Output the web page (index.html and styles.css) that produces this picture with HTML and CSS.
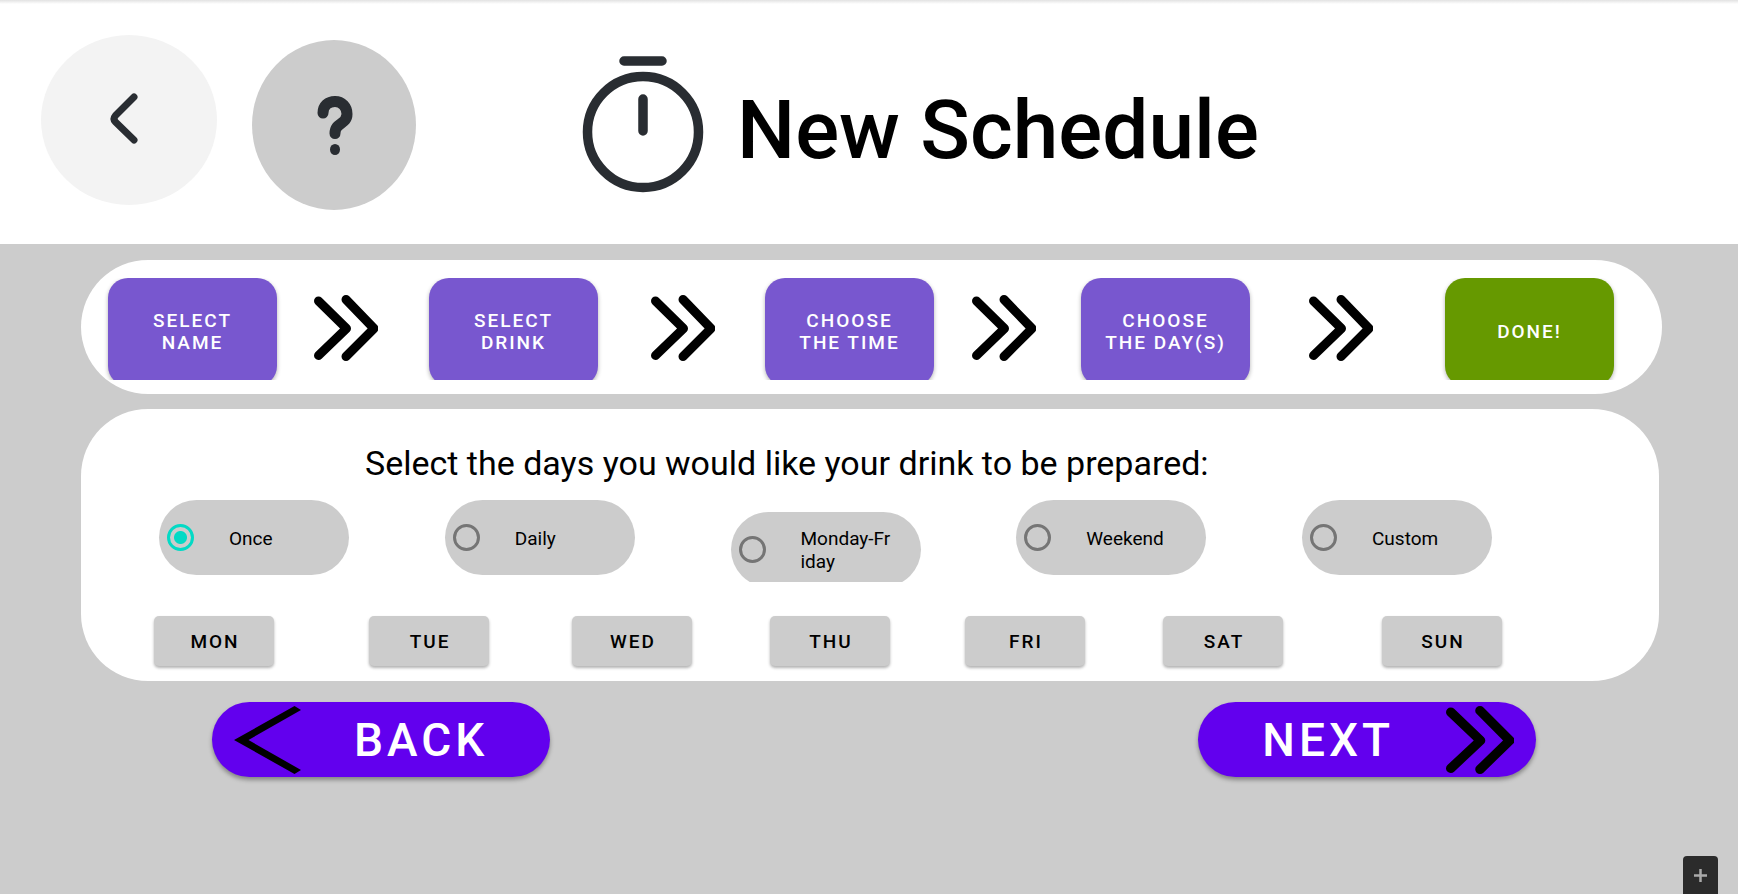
FILE: index.html
```html
<!DOCTYPE html>
<html lang="en">
<head>
<meta charset="utf-8">
<title>New Schedule</title>
<link rel="stylesheet" href="styles.css">
</head>
<body>
<svg class="sprite" aria-hidden="true">
  <symbol id="double-chevron" viewBox="0 0 64 66" preserveAspectRatio="none">
    <path d="M4.500 6 32.500 33.500 4.500 60.500M32 4.500 60 33.500 32 61.500" fill="none" stroke="#000" stroke-width="9" stroke-linecap="round" stroke-linejoin="round"/>
  </symbol>
</svg>

<header class="header">
  <button class="round-button" type="button" aria-label="Go back">
    <svg width="176" height="175" viewBox="0 0 176 175">
      <ellipse cx="88" cy="85" rx="88" ry="85" fill="#f3f3f3"/>
      <path d="M93 62 74.500 80.500Q71.500 84 74.500 87L93 105" fill="none" stroke="#292d32" stroke-width="7" stroke-linecap="round" stroke-linejoin="round"/>
    </svg>
  </button>
  <button class="round-button" type="button" aria-label="Help">
    <svg width="164" height="175" viewBox="0 0 164 175">
      <ellipse cx="82" cy="90" rx="82" ry="85" fill="#ccc"/>
      <path d="M71 78C71 71 76 66.500 83 66.500S95 72 95 79C95 90 83 87 83 98.500" fill="none" stroke="#292d32" stroke-width="11" stroke-linecap="round" stroke-linejoin="round"/>
      <ellipse cx="83" cy="114.500" rx="5" ry="5.500" fill="#292d32"/>
    </svg>
  </button>
  <div class="title">
    <svg width="122" height="138" viewBox="0 0 122 138" fill="none" stroke="#292d32" stroke-width="9.500" stroke-linecap="round" aria-hidden="true">
      <circle cx="61" cy="77" r="55.500"/>
      <path d="M42 6H80M61 44V76"/>
    </svg>
    <h1 class="title-text">New Schedule</h1>
  </div>
</header>

<main>
  <nav class="panel steps" aria-label="Steps">
    <button class="step" type="button">SELECT<br>NAME</button>
    <svg class="step-arrow"><use href="#double-chevron"/></svg>
    <button class="step" type="button">SELECT<br>DRINK</button>
    <svg class="step-arrow"><use href="#double-chevron"/></svg>
    <button class="step" type="button">CHOOSE<br>THE TIME</button>
    <svg class="step-arrow"><use href="#double-chevron"/></svg>
    <button class="step" type="button">CHOOSE<br>THE DAY(S)</button>
    <svg class="step-arrow"><use href="#double-chevron"/></svg>
    <button class="step step-done" type="button">DONE!</button>
  </nav>

  <section class="panel days-panel">
    <h2 class="question" id="question">Select the days you would like your drink to be prepared:</h2>
    <div class="options" role="radiogroup" aria-labelledby="question">
      <label class="option"><input class="radio" type="radio" name="repeat" checked><span class="option-text">Once</span></label>
      <label class="option"><input class="radio" type="radio" name="repeat"><span class="option-text">Daily</span></label>
      <label class="option"><input class="radio" type="radio" name="repeat"><span class="option-text">Monday-Friday</span></label>
      <label class="option"><input class="radio" type="radio" name="repeat"><span class="option-text">Weekend</span></label>
      <label class="option"><input class="radio" type="radio" name="repeat"><span class="option-text">Custom</span></label>
    </div>
    <div class="days">
      <button class="day" type="button">MON</button>
      <button class="day" type="button">TUE</button>
      <button class="day" type="button">WED</button>
      <button class="day" type="button">THU</button>
      <button class="day" type="button">FRI</button>
      <button class="day" type="button">SAT</button>
      <button class="day" type="button">SUN</button>
    </div>
  </section>

  <div class="actions">
    <button class="action" type="button">
      <svg width="68" height="68" viewBox="0 0 68 68" aria-hidden="true"><path d="M60.500 0 67 4 14.500 34 67 64 60.500 68 0 34Z"/></svg>
      <span class="action-text">BACK</span>
    </button>
    <button class="action action-next" type="button">
      <span class="action-text">NEXT</span>
      <svg width="68" height="68" aria-hidden="true"><use href="#double-chevron"/></svg>
    </button>
  </div>
</main>

<button class="add" type="button" aria-label="Add">
  <svg width="13" height="13" viewBox="0 0 13 13"><path d="M6.500 0V13M0 6.500H13" stroke="#aaa" stroke-width="2.500"/></svg>
</button>
</body>
</html>
```

FILE: styles.css
```css
* {
  box-sizing: border-box;
}

body {
  margin: 0;
  min-height: 100vh;
  background: #ccc;
  color: #000;
  font-family: Roboto, "Liberation Sans", sans-serif;
}

button {
  border: 0;
  padding: 0;
  font-family: inherit;
  cursor: pointer;
}

svg {
  display: block;
}

.sprite {
  position: absolute;
  width: 0;
  height: 0;
}

.header {
  display: flex;
  align-items: flex-start;
  gap: 35px;
  padding: 35px 40px 34px 41px;
  background: linear-gradient(#e2e2e2, #fff 4px);
}

.round-button {
  background: none;
}

.title {
  display: flex;
  align-items: center;
  gap: 33px;
  margin-left: 131px;
  padding-top: 20px;
}

.title-text {
  margin: 0;
  padding-top: 12px;
  font-size: 82px;
  line-height: 96px;
  font-weight: 500;
  white-space: nowrap;
}

.panel {
  background: #fff;
  border-radius: 67px;
}

.steps {
  display: grid;
  grid-template-columns: 206fr 115fr 222fr 114fr 207fr 109fr 228fr 136fr 169fr;
  justify-items: start;
  align-items: start;
  margin: 16px 76px 0 81px;
  padding: 18px 48px 8px 27px;
}

.step {
  width: 169px;
  height: 108px;
  border-radius: 20px;
  background: #7857cf;
  color: #fff;
  font-size: 19px;
  line-height: 22px;
  font-weight: 500;
  letter-spacing: 2px;
  box-shadow: 0 2px 4px rgba(0, 0, 0, 0.3);
  clip-path: inset(0 -6px 6px);
}

.step-done {
  background: #690;
}

.step-arrow {
  width: 64px;
  height: 66px;
  margin-top: 17px;
}

.days-panel {
  margin: 15px 79px 0 81px;
  padding: 34px 0 15px;
}

.question {
  margin: 0;
  padding: 0 284px;
  font-size: 34px;
  line-height: 41px;
  font-weight: 400;
  white-space: nowrap;
}

.options {
  display: flex;
  justify-content: space-between;
  align-items: baseline;
  height: 82px;
  margin-top: 16px;
  padding: 0 167px 0 78px;
  overflow: hidden;
}

.option {
  position: relative;
  display: grid;
  align-content: center;
  width: 190px;
  height: 75px;
  padding: 1px 28px 0 70px;
  border-radius: 38px;
  background: #ccc;
}

.option-text {
  font-size: 19px;
  line-height: 23px;
  word-break: break-all;
}

.radio {
  position: absolute;
  top: 24px;
  left: 8px;
  width: 27px;
  height: 27px;
  margin: 0;
  border: 3px solid #757575;
  border-radius: 50%;
  appearance: none;
}

.radio:checked {
  border-color: #03dac5;
  background: radial-gradient(circle, #03dac5 6px, transparent 7px);
}

.days {
  display: grid;
  grid-template-columns: 215fr 203fr 198fr 195fr 198fr 219fr 120fr;
  justify-items: start;
  margin-top: 34px;
  padding: 0 157px 0 73px;
}

.day {
  width: 120px;
  height: 50px;
  border-radius: 5px;
  background: #ccc;
  color: #000;
  font-size: 19px;
  font-weight: 500;
  letter-spacing: 2px;
  text-indent: 2px;
  box-shadow: 0 2px 3px rgba(0, 0, 0, 0.3);
}

.actions {
  display: flex;
  justify-content: space-between;
  margin-top: 21px;
  padding: 0 202px 0 212px;
}

.action {
  display: flex;
  align-items: center;
  gap: 52px;
  width: 338px;
  height: 75px;
  padding: 0 22px;
  border-radius: 38px;
  background: #6200ee;
  color: #fff;
  box-shadow: 0 3px 4px rgba(0, 0, 0, 0.35);
}

.action-next {
  justify-content: flex-end;
}

.action-text {
  font-size: 46px;
  line-height: 54px;
  font-weight: 500;
  letter-spacing: 4px;
}

.add {
  position: fixed;
  right: 20px;
  bottom: 0;
  display: grid;
  place-items: center;
  width: 35px;
  height: 38px;
  border-radius: 4px 4px 0 0;
  background: #2b2b2b;
}
```
